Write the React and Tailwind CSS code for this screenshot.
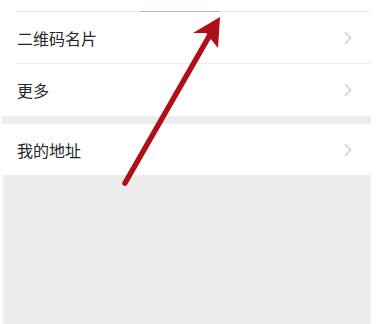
import { ChevronRight } from "lucide-react";

const font = { fontFamily: '"Noto Sans CJK SC", "Noto Sans", sans-serif' };

const Row = ({ label, className = "" }) => (
  <div className={`flex items-center justify-between pr-[12px] ${className}`}>
    <span className="text-[16px] text-[#262626]" style={font}>{label}</span>
    <ChevronRight size={22} strokeWidth={1.1} className="text-[#b0b0b0]" />
  </div>
);

export default function App() {
  return (
    <div className="relative w-[376px] h-[324px] bg-white overflow-hidden">
      <div className="ml-[2px] w-[369px] h-full flex flex-col bg-[#ececec]">
        <div className="bg-white pl-[14px]">
          <div className="h-[12px] border-b border-[#ececec] flex">
            <div className="ml-[124px] mt-[11px] w-[80px] h-[1px] bg-[#d9a9a2]" />
          </div>
        </div>
        <div className="bg-white pl-[14px]">
          <div className="h-[52px] border-b border-[#ececec]">
            <Row label="二维码名片" className="h-full pl-[1px]" />
          </div>
        </div>
        <div className="bg-white">
          <Row label="更多" className="h-[52px] pl-[15px]" />
        </div>
        <div className="h-[8px] bg-[#ececec]" />
        <div className="bg-white">
          <Row label="我的地址" className="h-[51px] pl-[15px]" />
        </div>
        <div className="flex-1 bg-[#ececec] border-l-[3px] border-[#f3f3f3]" />
      </div>

      <svg className="absolute inset-0 pointer-events-none" width="376" height="324" viewBox="0 0 376 324">
        <line x1="125" y1="183" x2="211" y2="33" stroke="#b10f17" strokeWidth="5.5" strokeLinecap="round" />
        <polygon points="220,17 193,33 206,33 218,48" fill="#b10f17" />
      </svg>
    </div>
  );
}
